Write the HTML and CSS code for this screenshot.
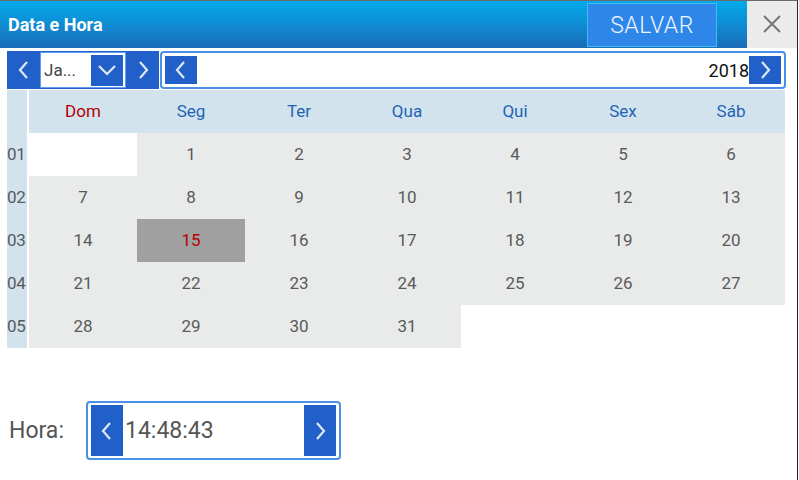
FILE: index.html
```html
<!DOCTYPE html>
<html lang="pt">
<head>
<meta charset="utf-8">
<title>Data e Hora</title>
<link rel="stylesheet" href="styles.css">
</head>
<body>
<div class="dialog">
  <header class="titlebar">
    <div class="title">Data e Hora</div>
    <button class="save">SALVAR</button>
    <button class="close" aria-label="Fechar">
      <svg width="20" height="20" viewBox="0 0 20 20"><path d="M2 2 L18 18 M18 2 L2 18" stroke="#777" stroke-width="2" fill="none"/></svg>
    </button>
  </header>

  <div class="nav">
    <div class="month-group">
      <div class="arrow-btn big">
        <svg width="12" height="20" viewBox="0 0 12 20"><polyline points="9,2 2,10 9,18" class="chev"/></svg>
      </div>
      <div class="month-select">
        <span class="month-text">Ja...</span>
        <div class="drop-btn">
          <svg width="20" height="12" viewBox="0 0 20 12"><polyline points="2,2 10,10 18,2" class="chev"/></svg>
        </div>
      </div>
      <div class="arrow-btn big">
        <svg width="12" height="20" viewBox="0 0 12 20"><polyline points="3,2 10,10 3,18" class="chev"/></svg>
      </div>
    </div>
    <div class="year-box">
      <div class="arrow-btn small">
        <svg width="12" height="20" viewBox="0 0 12 20"><polyline points="9,2 2,10 9,18" class="chev"/></svg>
      </div>
      <span class="year-text">2018</span>
      <div class="arrow-btn small">
        <svg width="12" height="20" viewBox="0 0 12 20"><polyline points="3,2 10,10 3,18" class="chev"/></svg>
      </div>
    </div>
  </div>

  <div class="calendar">
    <div class="wk"></div>
    <div class="dow sun">Dom</div><div class="dow">Seg</div><div class="dow">Ter</div><div class="dow">Qua</div><div class="dow">Qui</div><div class="dow">Sex</div><div class="dow">Sáb</div>

    <div class="wk">01</div>
    <div class="day empty"></div><div class="day">1</div><div class="day">2</div><div class="day">3</div><div class="day">4</div><div class="day">5</div><div class="day">6</div>

    <div class="wk">02</div>
    <div class="day">7</div><div class="day">8</div><div class="day">9</div><div class="day">10</div><div class="day">11</div><div class="day">12</div><div class="day">13</div>

    <div class="wk">03</div>
    <div class="day">14</div><div class="day selected">15</div><div class="day">16</div><div class="day">17</div><div class="day">18</div><div class="day">19</div><div class="day">20</div>

    <div class="wk">04</div>
    <div class="day">21</div><div class="day">22</div><div class="day">23</div><div class="day">24</div><div class="day">25</div><div class="day">26</div><div class="day">27</div>

    <div class="wk">05</div>
    <div class="day">28</div><div class="day">29</div><div class="day">30</div><div class="day">31</div><div class="day empty"></div><div class="day empty"></div><div class="day empty"></div>
  </div>

  <div class="time-row">
    <span class="time-label">Hora:</span>
    <div class="time-box">
      <div class="arrow-btn tall">
        <svg width="12" height="20" viewBox="0 0 12 20"><polyline points="9,2 2,10 9,18" class="chev"/></svg>
      </div>
      <span class="time-text">14:48:43</span>
      <div class="arrow-btn tall">
        <svg width="12" height="20" viewBox="0 0 12 20"><polyline points="3,2 10,10 3,18" class="chev"/></svg>
      </div>
    </div>
  </div>
</div>
</body>
</html>
```

FILE: styles.css
```css
* { box-sizing: border-box; }

html, body {
  margin: 0;
  padding: 0;
  background: #ffffff;
}

body {
  font-family: Roboto, "Liberation Sans", sans-serif;
  width: 799px;
  height: 480px;
  overflow: hidden;
}

.dialog {
  width: 798px;
  height: 480px;
  border-top: 1px solid #6b6b6b;
  border-right: 1px solid #262626;
  background: #ffffff;
}

/* title bar */
.titlebar {
  height: 47px;
  display: flex;
  align-items: stretch;
  background: linear-gradient(to bottom, #02aae8 0%, #0e8fd6 45%, #1b6cb7 100%);
}

.title {
  flex: 1;
  color: #ffffff;
  font-weight: 700;
  font-size: 18px;
  padding-left: 8px;
  display: flex;
  align-items: center;
  padding-bottom: 1px;
}

.save {
  margin: 2px 30px 1px 0;
  width: 130px;
  background: #2f86e9;
  border: 1px solid #3fbdf5;
  color: #eef6ff;
  font-family: Roboto, "Liberation Sans", sans-serif;
  font-weight: 300;
  font-size: 23px;
  letter-spacing: 0.5px;
  padding: 0;
  cursor: pointer;
}

.close {
  width: 50px;
  margin: 0;
  padding: 0;
  border: none;
  background: #ebebeb;
  display: flex;
  align-items: center;
  justify-content: center;
  padding-bottom: 2px;
}

/* navigation row */
.nav {
  display: flex;
  margin-top: 3px;
  padding-left: 7px;
  height: 38px;
  gap: 1px;
}

.month-group {
  display: flex;
  background: #2160c9;
  height: 38px;
}

.arrow-btn {
  background: #2160c9;
  display: flex;
  align-items: center;
  justify-content: center;
  flex: none;
}

.arrow-btn.big {
  width: 33px;
  height: 38px;
}

.arrow-btn.small {
  width: 32px;
  height: 28px;
}

.arrow-btn.tall {
  width: 32px;
  height: 51px;
}

.chev {
  fill: none;
  stroke: #dfe8f6;
  stroke-width: 2.2;
}

.month-select {
  width: 86px;
  height: 36px;
  margin-top: 1px;
  background: #ffffff;
  border: 1px solid #5c9ef0;
  display: flex;
  align-items: center;
  padding: 0 2px 0 3px;
}

.month-text {
  flex: 1;
  font-size: 17px;
  color: #444444;
}

.drop-btn {
  width: 32px;
  height: 31px;
  background: #2160c9;
  display: flex;
  align-items: center;
  justify-content: center;
}

.year-box {
  width: 626px;
  height: 38px;
  border: 2px solid #4a90e6;
  border-radius: 4px;
  padding: 3px;
  display: flex;
  align-items: center;
}

.year-text {
  flex: 1;
  text-align: right;
  font-size: 18px;
  color: #111111;
}

/* calendar */
.calendar {
  margin-top: 1px;
  margin-left: 7px;
  display: grid;
  grid-template-columns: 22px repeat(7, 108px);
  grid-auto-rows: 43px;
  width: 778px;
}

.wk {
  background: #d2e3ee;
  color: #5a5a5a;
  font-size: 17px;
  display: flex;
  align-items: center;
  letter-spacing: -0.3px;
  box-shadow: inset -2px 0 0 #ffffff;
  padding-bottom: 2px;
}

.dow {
  background: #d2e3ee;
  color: #1f63b4;
  font-size: 17px;
  display: flex;
  align-items: center;
  justify-content: center;
  padding-bottom: 2px;
}

.dow.sun { color: #b30000; }

.day {
  background: #e9eaea;
  color: #5a5a5a;
  font-size: 17px;
  display: flex;
  align-items: center;
  justify-content: center;
  padding-bottom: 2px;
}

.day.empty { background: #ffffff; }

.day.selected {
  background: #a0a0a0;
  color: #b30000;
}

/* time row */
.time-row {
  margin-top: 53px;
  display: flex;
  align-items: center;
  padding-left: 9px;
}

.time-label {
  font-size: 23px;
  color: #555555;
  width: 77px;
}

.time-box {
  width: 255px;
  height: 59px;
  border: 2px solid #4a90e6;
  border-radius: 4px;
  padding: 2px 3px;
  display: flex;
  align-items: center;
}

.time-text {
  flex: 1;
  font-size: 23px;
  color: #555555;
  padding-left: 2px;
}
```
